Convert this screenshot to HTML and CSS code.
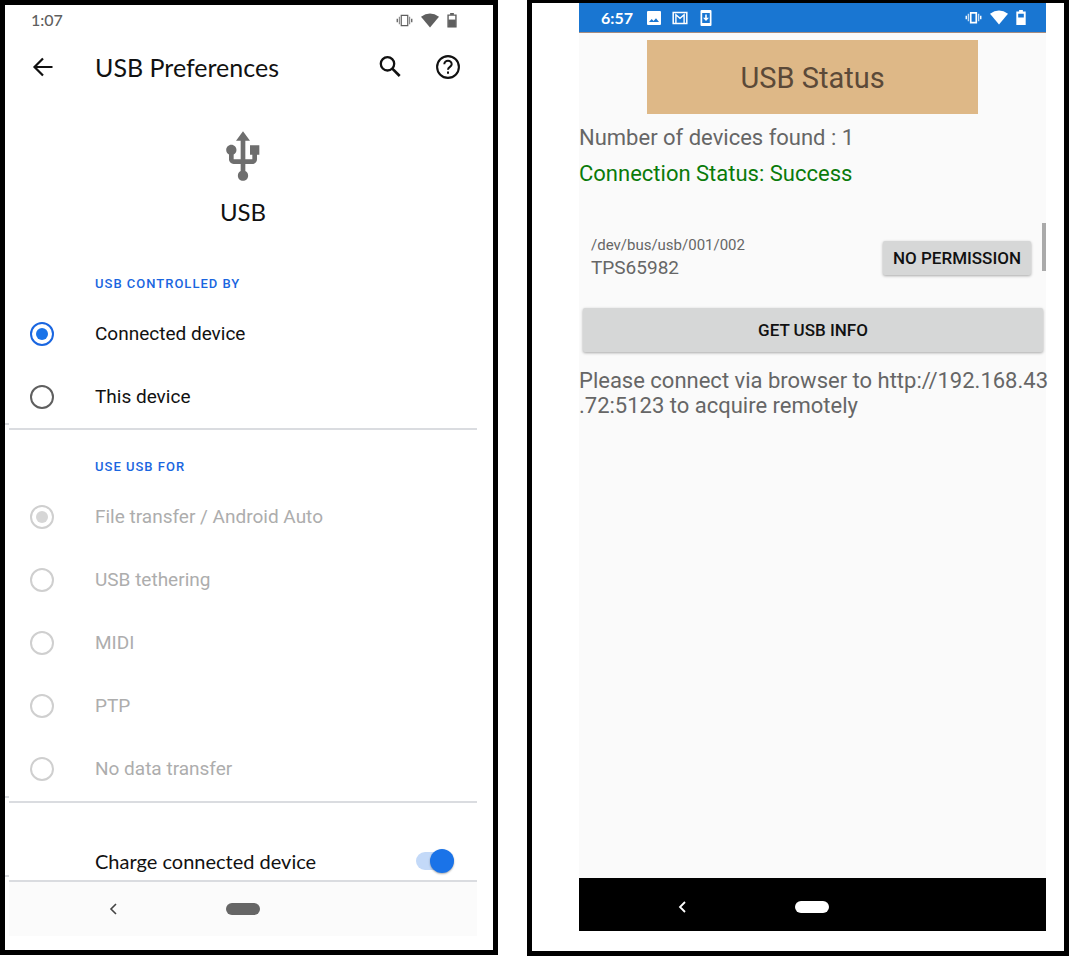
FILE: index.html
```html
<!DOCTYPE html>
<html lang="en">
<head>
<meta charset="utf-8">
<meta name="viewport" content="width=device-width, initial-scale=1">
<title>USB Preferences</title>
<link rel="stylesheet" href="styles.css">
</head>
<body>
<main class="screens">
  <section class="frame frame-settings">
    <header class="status">
      <span class="clock">1:07</span>
      <span class="status-icons">
        <svg class="vibrate" viewBox="0 0 18 14" aria-hidden="true"><path d="M5.500 1.500h7v11h-7z" fill="none" stroke="currentColor" stroke-width="1.300"/><path d="M3.500 3v8M14.500 3v8" stroke="currentColor" stroke-width="1.300" opacity=".7"/><path d="M1.200 5v4M16.800 5v4" stroke="currentColor" stroke-width="1.400"/></svg>
        <svg class="wifi" viewBox="0 0 18 14" aria-hidden="true"><path d="M0 3.200Q9-3.200 18 3.200L9 14z" fill="currentColor"/></svg>
        <svg class="battery" viewBox="0 0 10 16" aria-hidden="true"><path d="M3 0h4v2H3z" fill="currentColor"/><path d="M.8 2.300h8.400v12.400H.800z" fill="none" stroke="currentColor" stroke-width="1.500"/><path d="M1 7h8v8H1z" fill="currentColor"/></svg>
      </span>
    </header>
    <div class="appbar">
      <button class="icon-button" aria-label="Back"><svg class="icon-24" viewBox="0 0 24 24"><path d="M21.500 12H3.500M12 3.500L3.500 12l8.500 8.500" fill="none" stroke="currentColor" stroke-width="2.200"/></svg></button>
      <h1 class="appbar-title">USB Preferences</h1>
      <button class="icon-button" aria-label="Search"><svg class="icon-24" viewBox="0 0 24 24"><circle cx="9.500" cy="8.800" r="6.700" fill="none" stroke="currentColor" stroke-width="2.300"/><path d="M14.300 13.600l7.400 7.400" stroke="currentColor" stroke-width="2.700"/></svg></button>
      <button class="icon-button" aria-label="Help"><svg class="icon-24" viewBox="0 0 24 24"><circle cx="12" cy="12" r="10.900" fill="none" stroke="currentColor" stroke-width="2.100"/><path d="M8.300 9.300a3.700 3.500 0 0 1 7.400 0c0 2.500-3.700 2.700-3.700 5.500" fill="none" stroke="currentColor" stroke-width="2"/><path d="M11 16.600h2v2.100h-2z" fill="currentColor"/></svg></button>
    </div>
    <div class="hero">
      <svg class="usb-icon" viewBox="0 0 24 24" aria-hidden="true"><path fill="currentColor" d="M15 7v4h1v2h-3V5h2l-3-4-3 4h2v8H8v-2.070c.7-.37 1.200-1.080 1.200-1.930 0-1.210-.99-2.200-2.200-2.200-1.210 0-2.200.99-2.200 2.200 0 .85.5 1.560 1.200 1.930V13c0 1.110.89 2 2 2h3v3.050c-.71.37-1.200 1.100-1.200 1.950 0 1.220.99 2.200 2.200 2.200 1.210 0 2.200-.98 2.200-2.200 0-.85-.49-1.580-1.200-1.950V15h3c1.110 0 2-.89 2-2v-2h1V7h-4z"/></svg>
      <h2 class="hero-title">USB</h2>
    </div>
    <div class="group" role="radiogroup" aria-labelledby="controlled">
      <h3 class="group-title" id="controlled">USB CONTROLLED BY</h3>
      <label class="option"><input class="radio" type="radio" name="controller" checked>Connected device</label>
      <label class="option"><input class="radio" type="radio" name="controller">This device</label>
    </div>
    <div class="group group-uses" role="radiogroup" aria-labelledby="uses">
      <h3 class="group-title" id="uses">USE USB FOR</h3>
      <label class="option off"><input class="radio" type="radio" name="use" checked disabled>File transfer / Android Auto</label>
      <label class="option off"><input class="radio" type="radio" name="use" disabled>USB tethering</label>
      <label class="option off"><input class="radio" type="radio" name="use" disabled>MIDI</label>
      <label class="option off"><input class="radio" type="radio" name="use" disabled>PTP</label>
      <label class="option off"><input class="radio" type="radio" name="use" disabled>No data transfer</label>
    </div>
    <div class="group group-charge">
      <label class="charge">Charge connected device<input class="switch" type="checkbox" role="switch" checked></label>
    </div>
    <nav class="navbar">
      <button class="nav-back" aria-label="Back"><svg class="chevron" viewBox="0 0 8 12"><path d="M7 1L2 6l5 5" fill="none" stroke="currentColor" stroke-width="1.600"/></svg></button>
      <button class="nav-home" aria-label="Home"></button>
    </nav>
  </section>

  <section class="frame frame-app">
    <header class="status status-blue">
      <span class="clock">6:57</span>
      <span class="notices">
        <svg class="notice" viewBox="0 0 16 16" aria-hidden="true"><path fill="currentColor" fill-rule="evenodd" d="M2 1h12q1 0 1 1v12q0 1-1 1H2q-1 0-1-1V2q0-1 1-1zM3 12h10L10 8.300 7.500 11 5.700 9z"/></svg>
        <svg class="notice" viewBox="0 0 16 16" aria-hidden="true"><path d="M1.200 2.500h13.600v11H1.200z" fill="none" stroke="currentColor" stroke-width="1.500"/><path d="M3.900 13.500V4.700L8 8.300l4.100-3.600v8.800" fill="none" stroke="currentColor" stroke-width="1.400"/></svg>
        <svg class="notice" viewBox="0 0 16 16" aria-hidden="true"><path fill="currentColor" fill-rule="evenodd" d="M3.500 0h9q1 0 1 1v14q0 1-1 1h-9q-1 0-1-1V1q0-1 1-1zM4.200 3v10h7.600V3z"/><path d="M7.200 4.500h1.600v3.300H11L8 11 5 7.800h2.200z" fill="currentColor"/></svg>
      </span>
      <span class="status-icons">
        <svg class="vibrate" viewBox="0 0 18 14" aria-hidden="true"><path d="M6 2h6v10.500H6z" fill="none" stroke="currentColor" stroke-width="1.800"/><path d="M3.500 3v8M14.500 3v8" stroke="currentColor" stroke-width="1.500" opacity=".75"/><path d="M1.200 5v4M16.800 5v4" stroke="currentColor" stroke-width="1.500"/></svg>
        <svg class="wifi" viewBox="0 0 18 14" aria-hidden="true"><path d="M0 3.200Q9-3.200 18 3.200L9 14z" fill="currentColor"/></svg>
        <svg class="battery" viewBox="0 0 10 16" aria-hidden="true"><path fill="currentColor" fill-rule="evenodd" d="M3 0h4v1.500h3V16H0V1.500h3zM2 4v4h6V4z"/></svg>
      </span>
    </header>
    <div class="app-body">
      <h1 class="banner">USB Status</h1>
      <p class="line">Number of devices found : 1</p>
      <p class="line success">Connection Status: Success</p>
      <div class="device">
        <div class="device-info">
          <div class="device-path">/dev/bus/usb/001/002</div>
          <div class="device-name">TPS65982</div>
        </div>
        <button class="raised">NO PERMISSION</button>
        <span class="scroll-thumb"></span>
      </div>
      <button class="raised raised-wide">GET USB INFO</button>
      <p class="hint">Please connect via browser to http://192.168.43<wbr>.72:5123 to acquire remotely</p>
    </div>
    <nav class="navbar navbar-dark">
      <button class="nav-back" aria-label="Back"><svg class="chevron" viewBox="0 0 8 12"><path d="M7 1L2 6l5 5" fill="none" stroke="currentColor" stroke-width="1.800"/></svg></button>
      <button class="nav-home" aria-label="Home"></button>
    </nav>
  </section>
</main>
</body>
</html>
```
FILE: styles.css
```css
* { box-sizing: border-box; }
body { margin: 0; background: #fff; color: #111; font-family: Roboto, "Liberation Sans", sans-serif; }
h1, h2, h3, p { margin: 0; font-weight: 400; }
button { border: 0; padding: 0; background: none; color: inherit; font: inherit; cursor: pointer; }
svg { display: block; }

.screens { display: grid; grid-template-columns: minmax(0, 498fr) minmax(0, 542fr); align-items: start; gap: 29px; padding-right: 17px; }
.frame { border: 5px solid #000; background: #fff; }
.frame-settings { padding: 0 16px 14px 4px; }
.frame-app { border-top-width: 3px; padding: 0 18px 20px 47px; }

.status { display: flex; align-items: center; height: 30px; padding: 0 20px 0 22px; color: #5f5f5f; }
.clock { font: 500 16px/20px Lato, sans-serif; }
.status-icons { display: flex; align-items: center; gap: 8px; margin-left: auto; }
.vibrate { width: 17px; height: 13px; }
.wifi { width: 18px; height: 15px; }
.battery { width: 10px; height: 15px; }
.status-blue { background: #1976d2; color: #fff; border-bottom: 1px solid #a58c80; }
.status-blue .clock { font-weight: 700; }
.notices { display: flex; gap: 10px; margin-left: 13px; }
.notice { width: 16px; height: 16px; }

.appbar { display: flex; align-items: center; gap: 34px; height: 64px; padding: 0 17px 0 22px; }
.appbar-title { flex: 1; padding-left: 6px; font: 25px/32px Lato, sans-serif; }
.icon-24 { width: 24px; height: 24px; }

.hero { display: flex; flex-direction: column; align-items: center; gap: 12px; padding: 30px 0 47px; }
.usb-icon { width: 56px; height: 56px; color: #6e6e6e; }
.hero-title { font: 24px/30px Lato, sans-serif; }

.group { position: relative; border-bottom: 2px solid #dadce0; }
.group::after { content: ""; position: absolute; left: -4px; bottom: 3px; width: 4px; height: 2px; background: #dadce0; }
.group-uses { padding: 27px 0 1px; }
.group-title { padding: 0 0 8px 86px; font-size: 13px; font-weight: 500; line-height: 20px; letter-spacing: 1px; color: #1a66e0; }
.option { display: flex; align-items: center; gap: 41px; height: 63px; padding-left: 21px; font-size: 19px; }
.off { color: #adadad; }
.radio { appearance: none; display: grid; place-items: center; width: 24px; height: 24px; margin: 0; border: 2px solid #5f5f5f; border-radius: 50%; }
.radio:checked { border-color: #1a66e0; }
.radio:checked::before { content: ""; width: 12px; height: 12px; border-radius: 50%; background: #1a73e8; }
.radio:disabled { border-color: #cfcfcf; }
.radio:disabled:checked::before { background: #d6d6d6; }

.charge { display: flex; align-items: center; justify-content: space-between; height: 77px; padding: 39px 23px 0 86px; font: 20px/28px Lato, sans-serif; }
.switch { appearance: none; display: flex; align-items: center; justify-content: flex-end; width: 38px; height: 18px; margin: 0; border-radius: 9px; background: #c3d9f8; }
.switch::before { content: ""; width: 24px; height: 24px; border-radius: 50%; background: #1a73e8; box-shadow: 0 1px 2px #0005; flex: none; }

.navbar { display: grid; grid-template-columns: 2fr 1fr 2fr; align-items: center; justify-items: center; height: 54px; background: #fbfbfb; color: #444; }
.nav-back { padding: 8px; margin-left: 20px; }
.chevron { width: 8px; height: 12px; }
.nav-home { width: 34px; height: 12px; border-radius: 6px; background: #666; }
.navbar-dark { height: 53px; padding-top: 4px; background: #000; color: #fff; }
.navbar-dark .nav-home { background: #fff; }

.app-body { display: flex; flex-direction: column; min-height: 845px; padding-top: 7px; background: #fafafa; color: #666; }
.banner { align-self: center; width: 71%; margin-bottom: 6px; padding: 21px 0 19px; background: #deb887; color: #5b4938; font-size: 29px; line-height: 34px; text-align: center; }
.line { font-size: 22px; line-height: 36px; }
.success { color: #0a7a0a; }
.device { position: relative; display: flex; align-items: center; justify-content: space-between; margin: 43px 0 27px; padding: 0 15px 0 12px; }
.device-path { font-size: 15px; line-height: 20px; }
.device-name { font-size: 19px; line-height: 26px; }
.raised { padding: 7px 10px; border-radius: 2px; background: #d6d7d7; box-shadow: 0 1px 3px #0005; color: #111; font-size: 17px; font-weight: 500; line-height: 20px; }
.raised-wide { margin: 0 3px 0 4px; padding: 12px; }
.scroll-thumb { position: absolute; right: 0; top: -12px; width: 4px; height: 48px; background: #aaa; }
.hint { margin: 16px -4px 0 0; font-size: 22px; line-height: 25px; }
```
